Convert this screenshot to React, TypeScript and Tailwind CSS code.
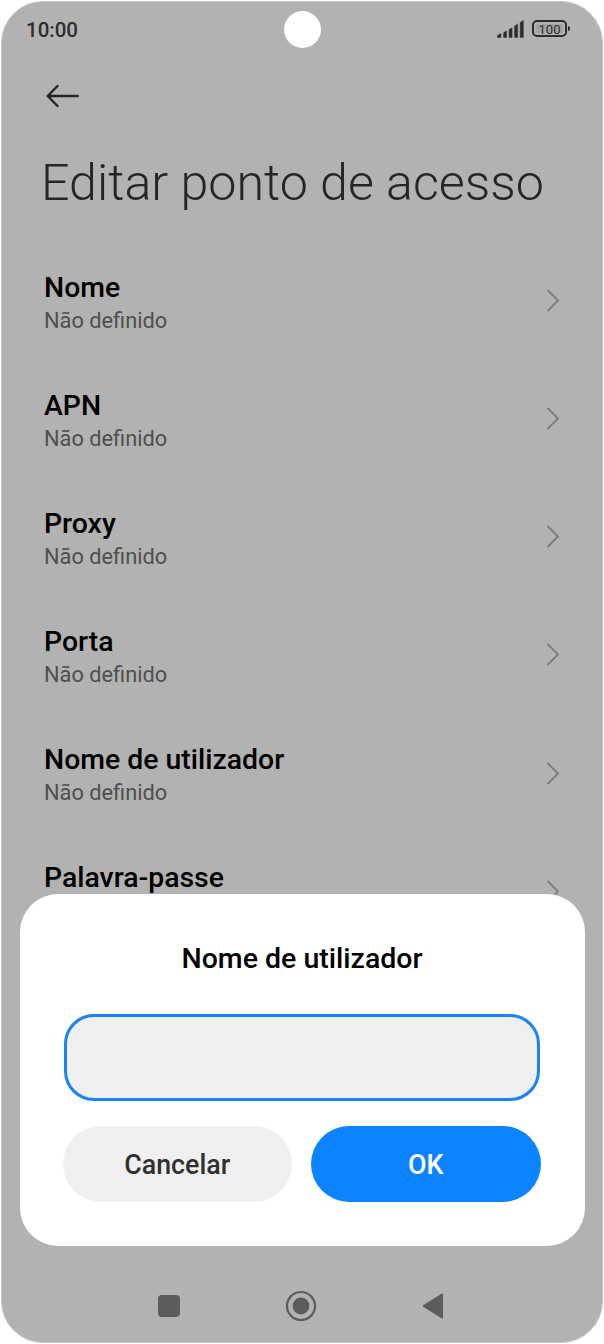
import { useState } from "react";

const settings = [
  { label: "Nome", value: "Não definido" },
  { label: "APN", value: "Não definido" },
  { label: "Proxy", value: "Não definido" },
  { label: "Porta", value: "Não definido" },
  { label: "Nome de utilizador", value: "Não definido" },
  { label: "Palavra-passe", value: "" },
];

const StatusBar = () => {
  return (
    <div className="flex items-start justify-between h-[60px] pl-6 pr-8 pt-[14px] text-[#2d2d2d]">
      <span className="pt-px text-[20.5px] leading-[27px] font-medium">10:00</span>
      <div className="flex items-start gap-2 pt-1">
        <svg width="28" height="19" viewBox="0 0 28 19" fill="currentColor">
          <path d="M0.5 15.4 3.9 13.6v3.8H0.5zM6.6 12.7l3-1.8v6.5h-3zM12.1 9.6l3-1.8v9.6h-3zM17.6 6l3-1.8v13.2h-3zM23.2 2.6l3.1-2v16.8h-3.1z" stroke="currentColor" strokeWidth="0.5" strokeLinejoin="round" />
        </svg>
        <div className="flex items-center gap-px -ml-px">
          <div className="flex items-center justify-center w-[35px] h-[17px] rounded-[5px] border-2 border-[#2d2d2d] p-[2px]">
            <span className="flex items-center justify-center w-full h-full pt-px rounded-[2px] bg-[#a3a3a3] text-[13px] leading-none">
              100
            </span>
          </div>
          <div className="w-[2px] h-[5px] rounded-r-sm bg-[#2d2d2d]" />
        </div>
      </div>
    </div>
  );
};

const Chevron = () => (
  <svg width="14" height="24" viewBox="0 0 14 24" fill="none" stroke="#7d7d7d" strokeWidth="1.9">
    <path d="M1.5 2 12 12.5 1.5 23" />
  </svg>
);

const NavBar = () => {
  return (
    <div className="flex items-center justify-between h-[73px] mt-auto pl-[156px] pr-[158px] text-[#5c5c5c]">
      <div className="w-[22px] h-[22px] rounded-[4px] bg-[#5c5c5c]" />
      <svg width="32" height="32" viewBox="0 0 32 32">
        <circle cx="16" cy="16" r="14" fill="none" stroke="currentColor" strokeWidth="2.2" />
        <circle cx="16" cy="16" r="8.4" fill="currentColor" />
      </svg>
      <svg width="22" height="28" viewBox="0 0 22 28" fill="currentColor">
        <path d="M20.3 2.2v23.6L1.5 14z" stroke="currentColor" strokeWidth="1.5" strokeLinejoin="round" />
      </svg>
    </div>
  );
};

const App = () => {
  const [username, setUsername] = useState("");

  return (
    <div className="w-[604px] h-[1344px] bg-white p-px font-[Roboto,sans-serif]">
      <div className="relative flex flex-col h-full overflow-hidden rounded-[42px] border border-[#c4c4c4] bg-[#b2b2b2]">
        <StatusBar />
        {/* front camera */}
        <div className="absolute left-[281.5px] top-[9px] w-[37px] h-[37px] rounded-full bg-white" />

        <div className="flex items-center h-[68px] pl-[43px]">
          <svg width="36" height="26" viewBox="0 0 36 26" fill="none" stroke="#262626" strokeWidth="2.4" strokeLinecap="round" strokeLinejoin="round">
            <path d="M12.5 3 2.7 13l9.8 10M2.7 13h30" />
          </svg>
        </div>
        <h1 className="h-[111px] pl-[39px] pt-[21px] text-[50.2px] leading-[64px] font-light whitespace-nowrap text-[#262626]">
          Editar ponto de acesso
        </h1>

        <div className="flex flex-col h-[654px] overflow-hidden">
          {settings.map((item) => (
            <div key={item.label} className="flex items-center justify-between shrink-0 h-[118.15px] pl-[42px] pr-[42px]">
              <div className="h-[61px]">
                <div className="text-[28.4px] leading-[36px] font-medium text-black">{item.label}</div>
                {item.value && (
                  <div className="text-[21.8px] leading-[30px] text-[#4f4f4f]">{item.value}</div>
                )}
              </div>
              <Chevron />
            </div>
          ))}
        </div>

        <div className="absolute left-[17.5px] top-[892px] w-[565px] h-[352px] px-[44px] rounded-[38px] bg-white">
          <h2 className="pt-[47px] text-center text-[28.5px] leading-[36px] font-medium text-black">
            Nome de utilizador
          </h2>
          <input
            value={username}
            onChange={(e) => setUsername(e.target.value)}
            className="block w-[476px] h-[87px] mt-[37px] px-6 rounded-[30px] border-3 border-[#1a83ef] bg-[#efefef] text-[26px] outline-none"
          />
          <div className="flex gap-[19px] mt-[25px] -ml-px w-[478px] text-[26.8px] font-medium">
            <button className="flex-1 h-[76px] pt-[3px] rounded-full bg-[#efefef] text-[#303030]">Cancelar</button>
            <button className="flex-1 h-[76px] pt-[3px] rounded-full bg-[#0d84ff] text-white">OK</button>
          </div>
        </div>

        <NavBar />
      </div>
    </div>
  );
};

export default App;
